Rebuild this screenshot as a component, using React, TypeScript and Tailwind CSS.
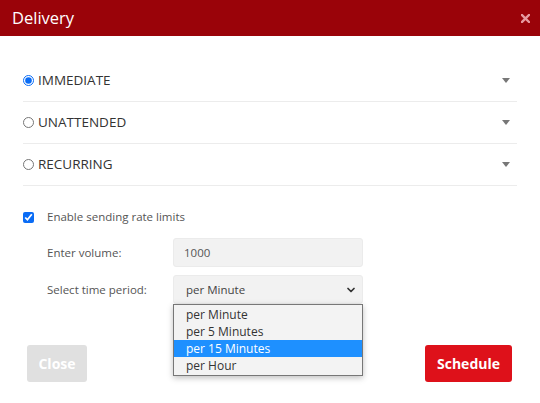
import React from 'react';
import { ChevronDown } from 'lucide-react';

const options = ['per Minute', 'per 5 Minutes', 'per 15 Minutes', 'per Hour'];

function Caret() {
    return (
        <svg width="8" height="6" viewBox="0 0 8 6" className="mr-[7px]">
            <path d="M0 0 H8 L4 5 Z" fill="#777" />
        </svg>
    );
}

function DeliveryRow({ label, checked }: { label: string; checked?: boolean }) {
    return (
        <div className="flex items-center justify-between h-[42px] border-b border-[#ececec]">
            <label className="flex items-center text-[13.5px] text-[#333]">
                <input
                    type="radio"
                    name="delivery"
                    defaultChecked={checked}
                    className="w-[11px] h-[11px] m-0 mr-[4px] accent-[#0a6cf5]"
                />
                {label}
            </label>
            <Caret />
        </div>
    );
}

export default function App() {
    return (
        <div className="w-[540px] h-[403px] bg-white font-['Open_Sans',sans-serif] flex flex-col">
            {/* Header */}
            <div className="h-[36px] bg-[#9a0309] flex items-center justify-between pl-[12px] pr-[10px]">
                <h2 className="text-[16.5px] text-white leading-none">Delivery</h2>
                <svg width="9" height="9" viewBox="0 0 9 9">
                    <path d="M1 1 L8 8 M8 1 L1 8" stroke="#e69aa0" strokeWidth="2.4" strokeLinecap="square" />
                </svg>
            </div>

            {/* Options */}
            <div className="px-[23px] pt-[24px]">
                <DeliveryRow label="IMMEDIATE" checked />
                <DeliveryRow label="UNATTENDED" />
                <DeliveryRow label="RECURRING" />
            </div>

            {/* Rate limits */}
            <div className="px-[23px] pt-[24px]">
                <label className="flex items-center text-[11.5px] text-[#555] h-[14px]">
                    <input type="checkbox" defaultChecked className="w-[11px] h-[11px] m-0 mr-[13px] accent-[#0a6cf5]" />
                    Enable sending rate limits
                </label>

                <div className="pl-[24px] mt-[14px] space-y-[8px]">
                    <div className="flex items-center">
                        <span className="w-[126px] text-[11.5px] text-[#555]">Enter volume:</span>
                        <div className="w-[190px] h-[29px] bg-[#f2f2f2] border border-[#ebebeb] rounded-[3px] flex items-center px-[10px] text-[11.5px] text-[#555]">
                            1000
                        </div>
                    </div>
                    <div className="flex items-center relative">
                        <span className="w-[126px] text-[11.5px] text-[#555]">Select time period:</span>
                        <div className="relative">
                            <div className="w-[190px] h-[29px] bg-[#f2f2f2] border border-[#ebebeb] rounded-[3px] flex items-center justify-between pl-[12px] pr-[5px] text-[11.5px] text-[#444]">
                                per Minute
                                <ChevronDown size={12} strokeWidth={3.5} color="#333" />
                            </div>
                            <div className="absolute left-0 top-[29px] w-[190px] bg-[#f3f3f3] border border-[#777] shadow-[0_2px_6px_rgba(0,0,0,0.25)] py-[1px] z-10">
                                {options.map((o) => (
                                    <div
                                        key={o}
                                        className={
                                            o === 'per 15 Minutes'
                                                ? 'h-[17px] flex items-center px-[12px] text-[12px] bg-[#1e90ff] text-white'
                                                : 'h-[17px] flex items-center px-[12px] text-[12px] text-[#333]'
                                        }
                                    >
                                        {o}
                                    </div>
                                ))}
                            </div>
                        </div>
                    </div>
                </div>
            </div>

            {/* Footer */}
            <div className="flex justify-between pl-[27px] pr-[28px] mt-[41px]">
                <button className="w-[60px] h-[37px] bg-[#e0e0e0] text-white font-bold text-[14px] rounded-[3px]">Close</button>
                <button className="w-[87px] h-[37px] bg-[#de111a] text-white font-bold text-[14px] rounded-[3px]">Schedule</button>
            </div>
        </div>
    );
}
